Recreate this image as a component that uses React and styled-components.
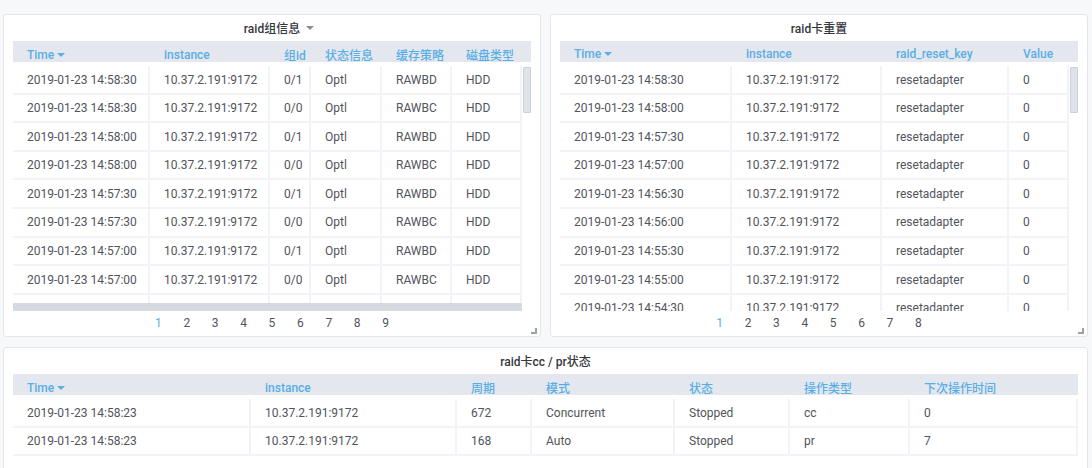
import React from 'react';
import styled, { createGlobalStyle } from 'styled-components';

const GlobalStyle = createGlobalStyle`
    html, body {
        margin: 0;
        padding: 0;
        overflow: hidden;
        background: #f7f8fa;
    }
    body {
        font-family: Roboto, "Noto Sans CJK SC", sans-serif;
        color: #52545c;
    }
`;

const Dashboard = styled.div`
    display: grid;
    grid-template-columns: 538px 538px;
    grid-template-rows: 323px auto;
    column-gap: 9px;
    row-gap: 10px;
    padding: 14px 0 0 3px;
    height: 468px;
    box-sizing: border-box;
    overflow: hidden;
`;

const PanelBox = styled.div`
    position: relative;
    background: #fff;
    border: 1px solid #e3e6eb;
    border-radius: 3px;
    padding: 0 9px;
    grid-column: ${(p) => (p.$wide ? '1 / -1' : 'auto')};
    height: ${(p) => (p.$wide ? '160px' : 'auto')};
`;

const PanelTitle = styled.div`
    height: 26px;
    padding-bottom: 2px;
    box-sizing: border-box;
    display: flex;
    align-items: center;
    justify-content: center;
    font-size: 12px;
    font-weight: 500;
    color: #35373d;
`;

const TitleText = styled.span`
    position: relative;
`;

const TitleCaret = styled.svg`
    position: absolute;
    left: calc(100% + 6px);
    top: 7px;
`;

const HeadRow = styled.div`
    display: grid;
    grid-template-columns: ${(p) => p.$cols};
    height: 21px;
    background: #e4e8ee;
`;

const HeadCell = styled.div`
    display: flex;
    align-items: center;
    padding: 5px 0 0 14px;
    font-size: 12px;
    font-weight: 500;
    color: #5aaee6;
    white-space: nowrap;
`;

const SortCaret = styled.svg`
    margin-left: 3px;
`;

const BodyWrap = styled.div`
    display: flex;
    height: ${(p) => p.$h}px;
    padding-top: 4px;
    box-sizing: border-box;
    overflow: hidden;
`;

const Rows = styled.div`
    width: ${(p) => p.$w}px;
    overflow: hidden;
`;

const Row = styled.div`
    display: grid;
    grid-template-columns: ${(p) => p.$cols};
    height: 28.6px;
    box-sizing: border-box;
    border-bottom: 2px solid #f1f3f6;
`;

const Cell = styled.div`
    padding: 1.5px 0 0 14px;
    border-right: 2px solid #f1f3f6;
    font-size: 12px;
    line-height: 25px;
    white-space: nowrap;
    overflow: hidden;
`;

const VTrack = styled.div`
    width: 9px;
`;

const VThumb = styled.div`
    margin: 1px 0 0 1px;
    width: 8px;
    height: 46px;
    box-sizing: border-box;
    background: #dfe3e9;
    border: 1px solid #cbd1d8;
    border-radius: 1px;
`;

const HScroll = styled.div`
    width: ${(p) => p.$w}px;
    height: 8px;
    background: #d5dae1;
    border-radius: 1px;
`;

const Pager = styled.div`
    display: flex;
    justify-content: center;
    align-items: center;
    height: 25px;
    padding-bottom: 2px;
    box-sizing: border-box;
`;

const PageLink = styled.span`
    width: 28.4px;
    text-align: center;
    font-size: 12px;
    color: ${(p) => (p.$active ? '#5aaee6' : '#52545c')};
`;

const ResizeHandle = styled.div`
    position: absolute;
    right: 3px;
    bottom: 2px;
    width: 4px;
    height: 4px;
    border-right: 2px solid #9ea2a8;
    border-bottom: 2px solid #9ea2a8;
`;

const Caret = ({ color, as: Comp }) => (
    <Comp width="8" height="4" viewBox="0 0 8 4">
        <path d="M0 0 L8 0 L4 4 Z" fill={color} />
    </Comp>
);

const Table = ({ columns, rows, bodyHeight, vScroll, hScroll }) => {
    const cols = columns.map((c) => `${c.width}px`).join(' ');
    const width = columns.reduce((sum, c) => sum + c.width, 0);
    return (
        <>
            <HeadRow $cols={cols}>
                {columns.map((c) => (
                    <HeadCell key={c.title}>
                        {c.title}
                        {c.sort && <Caret as={SortCaret} color="#5aaee6" />}
                    </HeadCell>
                ))}
            </HeadRow>
            <BodyWrap $h={bodyHeight}>
                <Rows $w={width}>
                    {rows.map((r, i) => (
                        <Row $cols={cols} key={i}>
                            {r.map((v, j) => (
                                <Cell key={j}>{v}</Cell>
                            ))}
                        </Row>
                    ))}
                </Rows>
                {vScroll && (
                    <VTrack>
                        <VThumb />
                    </VTrack>
                )}
            </BodyWrap>
            {hScroll && <HScroll $w={width} />}
        </>
    );
};

const Pagination = ({ pages }) => (
    <Pager>
        {Array.from({ length: pages }, (_, i) => (
            <PageLink key={i} $active={i === 0}>
                {i + 1}
            </PageLink>
        ))}
    </Pager>
);

const IP = '10.37.2.191:9172';
const day = '2019-01-23 ';

const raidGroupCols = [
    { title: 'Time', width: 137, sort: true },
    { title: 'instance', width: 120 },
    { title: '组id', width: 41 },
    { title: '状态信息', width: 71 },
    { title: '缓存策略', width: 70 },
    { title: '磁盘类型', width: 70 },
];

const raidGroupRows = ['14:58:30', '14:58:30', '14:58:00', '14:58:00', '14:57:30', '14:57:30', '14:57:00', '14:57:00'].map(
    (t, i) => [day + t, IP, i % 2 ? '0/0' : '0/1', 'Optl', i % 2 ? 'RAWBC' : 'RAWBD', 'HDD']
);
// the ninth row sits under the horizontal scrollbar, only its cell borders peek out
raidGroupRows.push(['', '', '', '', '', '']);

const resetCols = [
    { title: 'Time', width: 172, sort: true },
    { title: 'instance', width: 150 },
    { title: 'raid_reset_key', width: 127 },
    { title: 'Value', width: 60 },
];

const resetRows = ['14:58:30', '14:58:00', '14:57:30', '14:57:00', '14:56:30', '14:56:00', '14:55:30', '14:55:00', '14:54:30'].map(
    (t) => [day + t, IP, 'resetadapter', '0']
);

const ccCols = [
    { title: 'Time', width: 238, sort: true },
    { title: 'instance', width: 206 },
    { title: '周期', width: 75 },
    { title: '模式', width: 143 },
    { title: '状态', width: 115 },
    { title: '操作类型', width: 120 },
    { title: '下次操作时间', width: 168 },
];

const ccRows = [
    [day + '14:58:23', IP, '672', 'Concurrent', 'Stopped', 'cc', '0'],
    [day + '14:58:23', IP, '168', 'Auto', 'Stopped', 'pr', '7'],
];

const App = () => (
    <>
        <GlobalStyle />
        <Dashboard>
            <PanelBox>
                <PanelTitle>
                    <TitleText>
                        raid组信息
                        <Caret as={TitleCaret} color="#8a8d93" />
                    </TitleText>
                </PanelTitle>
                <Table columns={raidGroupCols} rows={raidGroupRows} bodyHeight={241} vScroll hScroll />
                <Pagination pages={9} />
                <ResizeHandle />
            </PanelBox>
            <PanelBox>
                <PanelTitle>raid卡重置</PanelTitle>
                <Table columns={resetCols} rows={resetRows} bodyHeight={249} vScroll />
                <Pagination pages={8} />
                <ResizeHandle />
            </PanelBox>
            <PanelBox $wide>
                <PanelTitle>raid卡cc / pr状态</PanelTitle>
                <Table columns={ccCols} rows={ccRows} bodyHeight={70} />
            </PanelBox>
        </Dashboard>
    </>
);

export default App;
